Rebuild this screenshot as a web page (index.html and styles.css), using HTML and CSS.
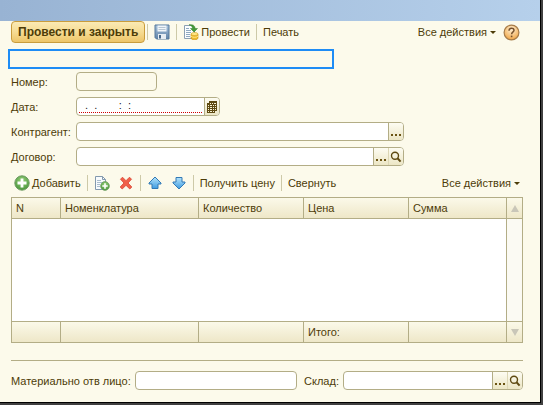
FILE: index.html
```html
<!DOCTYPE html>
<html lang="ru">
<head>
<meta charset="utf-8">
<title>Документ</title>
<link rel="stylesheet" href="styles.css">
</head>
<body>
<svg class="defs" aria-hidden="true">
  <defs>
    <linearGradient id="blue" x1="0" y1="0" x2="0" y2="1"><stop offset="0" stop-color="#b5e4fb"/><stop offset="1" stop-color="#3f9be0"/></linearGradient>
    <linearGradient id="steel" x1="0" y1="0" x2="0" y2="1"><stop offset="0" stop-color="#a9c3dc"/><stop offset="1" stop-color="#5f83a8"/></linearGradient>
    <radialGradient id="green" cx=".5" cy=".35" r=".6"><stop offset="0" stop-color="#9ad27c"/><stop offset="1" stop-color="#4f9a40"/></radialGradient>
    <radialGradient id="orange" cx=".5" cy=".3" r=".7"><stop offset="0" stop-color="#fff0d4"/><stop offset="1" stop-color="#f0a545"/></radialGradient>
    <symbol id="lens" viewBox="0 0 12 12"><circle cx="5" cy="4.7" r="3.500" fill="none" stroke="#5f4a12" stroke-width="1.400"/><path d="M7.500 7.300L10.600 10.600" stroke="#5f4a12" stroke-width="2"/></symbol>
    <symbol id="dots" viewBox="0 0 12 12"><path d="M1 8h2v2H1zM5 8h2v2H5zM9 8h2v2H9z" fill="#6b5312"/></symbol>
  </defs>
</svg>
<div class="window">
  <header class="titlebar"></header>
  <main class="form">
    <div class="toolbar">
      <button class="primary">Провести и закрыть</button>
      <span class="sep"></span>
      <button class="tool" aria-label="Записать">
        <svg width="16" height="16" viewBox="0 0 16 16"><path d="M1 1h14v14H2.500L1 13.500z" fill="url(#steel)" stroke="#54789c"/><path d="M3.500 1.500h9v6h-9z" fill="#f1f6fa"/><path d="M4.500 3.500h7M4.500 5.500h7" stroke="#b7c6d4"/><path d="M4 10h8v5H4z" fill="#e6edf3"/><path d="M5 11h2v3.500H5z" fill="#48698c"/></svg>
      </button>
      <span class="sep"></span>
      <button class="tool">
        <svg width="16" height="16" viewBox="0 0 16 16"><path d="M1.500 1.500h8l2 2v11h-10z" fill="#fbfdff" stroke="#8da0b3"/><path d="M3 4.500h3M3 6.500h5M3 8.500h5M3 10.500h4M3 12.500h4" stroke="#8fa9c2"/><path d="M6 .8c4-.6 6 .8 6 3.700h2.500L11 8 7.500 4.500h2C9.500 2.500 8.500 1.600 6 .8z" fill="#459a37" stroke="#2f7b28" stroke-width=".5"/><path d="M8 10v4c0 2.400 7 2.400 7 0v-4z" fill="#eeb92b" stroke="#c58b12" stroke-width=".6"/><ellipse cx="11.500" cy="10" rx="3.500" ry="1.500" fill="#ffe887" stroke="#d09b1c" stroke-width=".6"/><path d="M8 12.200c1 1.500 6 1.500 7 0" fill="none" stroke="#fff0a0" stroke-width=".8"/></svg>
        Провести
      </button>
      <span class="sep"></span>
      <button class="tool">Печать</button>
      <button class="tool end">Все действия <i class="caret"></i></button>
      <button class="tool help" aria-label="Справка">
        <svg width="17" height="17" viewBox="0 0 17 17"><circle cx="8.500" cy="8.500" r="7.400" fill="url(#orange)" stroke="#a77c4a" stroke-width="1.200"/><path d="M6 6.700c0-3.300 5-3.300 5-.4 0 1.900-2.400 1.900-2.400 3.900" fill="none" stroke="#76502c" stroke-width="1.500"/><path d="M7.800 11.600h1.600v1.600H7.800z" fill="#76502c"/></svg>
      </button>
    </div>

    <div class="notice" tabindex="0"></div>

    <div class="fields">
      <label for="num">Номер:</label>
      <div class="box short"><input id="num" readonly></div>
      <label for="date">Дата:</label>
      <div class="box date"><input id="date" class="required" value="  .  .       :  :"><button aria-label="Календарь"><svg width="12" height="12" viewBox="0 0 12 12"><path d="M3 0h8v10H9v2H1V2h2z" fill="#5f4a12"/><path d="M4 2h1v1H4zM6 2h1v1H6zM8 2h2v1H8zM2 4h1v1H2zM4 4h2v1H4zM7 4h1v1H7zM9 4h1v1H9zM2 6h1v1H2zM4 6h2v1H4zM7 6h1v1H7zM9 6h1v1H9zM2 8h1v1H2zM4 8h2v1H4zM7 8h1v1H7zM9 8h1v1H9zM2 10h1v1H2zM4 10h2v1H4zM7 10h1v1H7z" fill="#f8f3d6"/></svg></button></div>
      <label for="partner">Контрагент:</label>
      <div class="box wide"><input id="partner"><button aria-label="Выбрать"><svg width="12" height="12"><use href="#dots"/></svg></button></div>
      <label for="contract">Договор:</label>
      <div class="box wide"><input id="contract"><button aria-label="Выбрать"><svg width="12" height="12"><use href="#dots"/></svg></button><button class="joined" aria-label="Открыть"><svg width="12" height="12"><use href="#lens"/></svg></button></div>
    </div>

    <div class="toolbar list">
      <button class="tool add">
        <svg width="16" height="16" viewBox="0 0 16 16"><circle cx="8" cy="8" r="7.200" fill="url(#green)" stroke="#6d9b62"/><path d="M6.600 3.500h2.800v3.100h3.100v2.800H9.400v3.100H6.600V9.400H3.500V6.600h3.100z" fill="#fff"/></svg>
        Добавить
      </button>
      <span class="sep"></span>
      <button class="tool" aria-label="Скопировать">
        <svg width="16" height="16" viewBox="0 0 16 16"><path d="M1.500 1.500h7l3 3v10h-10z" fill="#f8fbfd" stroke="#8399ae"/><path d="M8.500 1.500v3h3" fill="none" stroke="#8399ae"/><path d="M3 5.500h4M3 7.500h6M3 9.500h3M3 11.500h3" stroke="#a9bccd"/><circle cx="11" cy="11" r="4.400" fill="url(#green)" stroke="#6d9b62" stroke-width=".7"/><path d="M10.200 8.300h1.600v1.900h1.900v1.600h-1.900v1.900h-1.600v-1.900H8.300v-1.600h1.900z" fill="#fff"/></svg>
      </button>
      <button class="tool" aria-label="Удалить">
        <svg width="16" height="16" viewBox="0 0 16 16"><path d="M2.500 4.200l2-2L8 5.700l3.500-3.500 2 2L10 8l3.800 4-2 2L8 10.300 4.200 14l-2-2L6 8z" fill="#f0604a" stroke="#d8402f" stroke-width=".8"/></svg>
      </button>
      <span class="sep"></span>
      <button class="tool" aria-label="Вверх">
        <svg width="16" height="16" viewBox="0 0 16 16"><path d="M8 2l6 6v1h-3v4.500H5V9H2V8z" fill="url(#blue)" stroke="#3279b5"/></svg>
      </button>
      <button class="tool" aria-label="Вниз">
        <svg width="16" height="16" viewBox="0 0 16 16"><path d="M8 14l6-6V7h-3V2.500H5V7H2v1z" fill="url(#blue)" stroke="#3279b5"/></svg>
      </button>
      <span class="sep"></span>
      <button class="tool">Получить цену</button>
      <span class="sep"></span>
      <button class="tool">Свернуть</button>
      <button class="tool end">Все действия <i class="caret"></i></button>
    </div>

    <div class="grid">
      <table>
        <colgroup><col class="c-n"><col class="c-item"><col class="c-qty"><col class="c-qty"><col class="c-sum"></colgroup>
        <thead><tr><th>N</th><th>Номенклатура</th><th>Количество</th><th>Цена</th><th>Сумма</th></tr></thead>
        <tbody><tr><td colspan="5"></td></tr></tbody>
        <tfoot><tr><td></td><td></td><td></td><td>Итого:</td><td></td></tr></tfoot>
      </table>
      <div class="scroll">
        <button aria-label="Прокрутить вверх"><i class="up"></i></button>
        <span class="track"></span>
        <button aria-label="Прокрутить вниз"><i class="down"></i></button>
      </div>
    </div>

    <div class="bottom">
      <label for="person">Материально отв лицо:</label>
      <div class="box person"><input id="person"></div>
      <label for="store">Склад:</label>
      <div class="box store"><input id="store"><button aria-label="Выбрать"><svg width="12" height="12"><use href="#dots"/></svg></button><button class="joined" aria-label="Открыть"><svg width="12" height="12"><use href="#lens"/></svg></button></div>
    </div>
  </main>
</div>
</body>
</html>
```
FILE: styles.css
```css
* { box-sizing: border-box; }
body {
  margin: 0;
  background: #404040;
  color: #4d3c08;
  font: 11px/16px "Liberation Sans", Arial, sans-serif;
}
button, input { font: inherit; color: inherit; margin: 0; padding: 0; border: 0; background: none; }
svg { display: block; flex: none; }
.defs { position: absolute; width: 0; height: 0; }
.window {
  display: flex;
  flex-direction: column;
  min-height: calc(100vh - 2px);
  margin: 0 2px 2px 0;
  border: solid #000;
  border-width: 0 1px 1px 0;
  background: #fcfaeb;
}
.titlebar { height: 21px; background: linear-gradient(90deg, #98b3d3, #b6d0eb); }
.form {
  flex: 1;
  display: flex;
  flex-direction: column;
  padding: 0 17px 12px 11px;
}

.toolbar { display: flex; align-items: center; height: 22px; }
.primary {
  height: 22px;
  padding: 0 6px;
  border: 1px solid #c99c3c;
  border-radius: 4px;
  background: linear-gradient(#fbeab4, #f6dc93 50%, #edc569);
  font-size: 12px;
  font-weight: bold;
}
.tool { display: flex; align-items: center; gap: 2px; height: 20px; padding: 0 4px; white-space: nowrap; }
.sep { width: 1px; height: 16px; margin: 0 2px; background: #cdc9a8; }
.end { margin-left: auto; padding-right: 3px; gap: 3px; }
.caret { border: solid transparent; border-width: 3px 3px 0; border-top-color: #4d3c08; }
.help { padding: 0 3px 0 4px; }

.notice { width: 326px; height: 20px; margin: 6px 0 3px -3px; border: 2px solid #1e8cf5; }

.fields { display: grid; grid-template-columns: 65px 1fr; row-gap: 6px; align-items: center; }
.box {
  display: flex;
  height: 19px;
  border: 1px solid #b3ad86;
  border-radius: 4px;
  background: #fff;
  overflow: hidden;
}
.box input { flex: 1; min-width: 0; margin: 0 2px; outline: 0; }
.box .required { margin-bottom: 2px; border-bottom: 1px dotted #d00000; color: #222; }
.box button {
  display: grid;
  place-items: center;
  width: 15px;
  border-left: 1px solid #b3ad86;
  background: linear-gradient(#fdfcf2, #ece6c5);
}
.box .joined { border-left-color: #dcd6b4; }
.short { width: 81px; background: #fcfaeb; }
.date { width: 144px; }
.wide { width: 328px; }

.list { margin: 6px 0 3px; }
.add { padding-left: 3px; }

.grid { flex: 1; display: flex; min-height: 146px; border: 1px solid #b3ad86; background: #fff; }
table { flex: 1; border-collapse: separate; border-spacing: 0; table-layout: fixed; }
.c-n { width: 48px; }
.c-item { width: 138px; }
.c-qty { width: 105px; }
.c-sum { width: 98px; }
th, tfoot td {
  height: 21px;
  padding: 0 4px;
  border-left: 1px solid #b3ad86;
  background: linear-gradient(#fbf9e9, #eee7c8);
  font-weight: normal;
  text-align: left;
}
th:first-child, tfoot td:first-child { border-left: 0; }
th { border-bottom: 1px solid #b3ad86; }
tfoot td { border-top: 1px solid #b3ad86; }
tbody td { padding: 0; }
.scroll { display: flex; flex-direction: column; width: 16px; border-left: 1px solid #b3ad86; background: #fbfaf3; }
.scroll button { display: grid; place-items: center; height: 20px; background: linear-gradient(#fbf9e9, #eee7c8); }
.track { flex: 1; border: solid #b3ad86; border-width: 1px 0; }
.up, .down { border: solid transparent; }
.up { border-width: 0 4px 7px; border-bottom-color: #c9c6b8; }
.down { border-width: 7px 4px 0; border-top-color: #c9c6b8; }

.bottom {
  display: flex;
  align-items: center;
  margin-top: 17px;
  padding-top: 10px;
  border-top: 1px solid #b3ad86;
}
.bottom .box { margin-left: 4px; }
.bottom .person { flex: 163; margin-right: 7px; }
.bottom .store { flex: 181; }
```
